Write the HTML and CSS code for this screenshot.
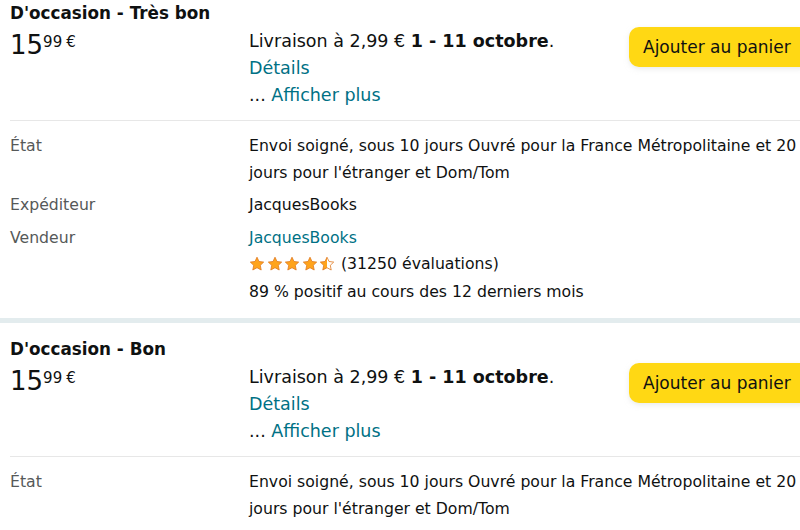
FILE: index.html
```html
<!DOCTYPE html>
<html lang="fr">
<head>
<meta charset="utf-8">
<link rel="stylesheet" href="styles.css">
</head>
<body>
<div class="page">
  <section class="offer">
    <h2 class="title">D'occasion - Très bon</h2>
    <div class="head">
      <div class="price"><span class="whole">15</span><span class="frac">99</span><span class="cur">€</span></div>
      <div class="delivery">
        <div>Livraison à 2,99 € <b>1 - 11 octobre</b>.</div>
        <div><a class="link">Détails</a></div>
        <div>... <a class="link">Afficher plus</a></div>
      </div>
      <button class="cart">Ajouter au panier</button>
    </div>
    <div class="details">
      <div class="label">État</div>
      <div class="value">Envoi soigné, sous 10 jours Ouvré pour la France Métropolitaine et 20 jours pour l'étranger et Dom/Tom</div>
      <div class="label">Expéditeur</div>
      <div class="value">JacquesBooks</div>
      <div class="label">Vendeur</div>
      <div class="value">
        <div><a class="link">JacquesBooks</a></div>
        <div class="rating">
          <span class="stars">
            <svg viewBox="0 0 16 16" width="16" height="16"><path class="st" d="M8 1.2l2 4.3 4.7.6-3.4 3.2.9 4.7L8 11.7 3.8 14l.9-4.7L1.3 6.1l4.7-.6z"/></svg>
            <svg viewBox="0 0 16 16" width="16" height="16"><path class="st" d="M8 1.2l2 4.3 4.7.6-3.4 3.2.9 4.7L8 11.7 3.8 14l.9-4.7L1.3 6.1l4.7-.6z"/></svg>
            <svg viewBox="0 0 16 16" width="16" height="16"><path class="st" d="M8 1.2l2 4.3 4.7.6-3.4 3.2.9 4.7L8 11.7 3.8 14l.9-4.7L1.3 6.1l4.7-.6z"/></svg>
            <svg viewBox="0 0 16 16" width="16" height="16"><path class="st" d="M8 1.2l2 4.3 4.7.6-3.4 3.2.9 4.7L8 11.7 3.8 14l.9-4.7L1.3 6.1l4.7-.6z"/></svg>
            <svg viewBox="0 0 16 16" width="16" height="16"><path class="st-half" d="M8 1.2L6 5.5l-4.7.6 3.4 3.2-.9 4.7L8 11.7z"/><path class="st-out" d="M8 1.2l2 4.3 4.7.6-3.4 3.2.9 4.7L8 11.7 3.8 14l.9-4.7L1.3 6.1l4.7-.6z"/></svg>
          </span>
          <span>(31250 évaluations)</span>
        </div>
        <div>89 % positif au cours des 12 derniers mois</div>
      </div>
    </div>
  </section>
  <section class="offer">
    <h2 class="title">D'occasion - Bon</h2>
    <div class="head">
      <div class="price"><span class="whole">15</span><span class="frac">99</span><span class="cur">€</span></div>
      <div class="delivery">
        <div>Livraison à 2,99 € <b>1 - 11 octobre</b>.</div>
        <div><a class="link">Détails</a></div>
        <div>... <a class="link">Afficher plus</a></div>
      </div>
      <button class="cart">Ajouter au panier</button>
    </div>
    <div class="details">
      <div class="label">État</div>
      <div class="value">Envoi soigné, sous 10 jours Ouvré pour la France Métropolitaine et 20 jours pour l'étranger et Dom/Tom</div>
      <div class="label">Expéditeur</div>
      <div class="value">JacquesBooks</div>
    </div>
  </section>
</div>
</body>
</html>
```
FILE: styles.css
```css
html, body {
  margin: 0;
  padding: 0;
  background: #ffffff;
  overflow: hidden;
}
body {
  font-family: "DejaVu Sans", "Noto Sans", sans-serif;
  color: #0f1111;
}
.page {
  width: 812px;
  margin-top: -13px;
}
.offer {
  padding: 15px 0 13px 10px;
  border-bottom: 5px solid #e3ecee;
}
.title {
  margin: 0;
  font-size: 16.8px;
  line-height: 22px;
  font-weight: 700;
}
.head {
  display: grid;
  grid-template-columns: 239px 1fr 183px;
  align-items: start;
  margin-top: 4px;
  padding-bottom: 11px;
  border-bottom: 1px solid #e7e7e7;
}
.price {
  display: flex;
  align-items: flex-start;
  padding-top: 2px;
}
.whole {
  font-size: 26px;
  line-height: 30px;
}
.frac, .cur {
  font-size: 15px;
  line-height: 18px;
  margin-top: 3px;
}
.cur {
  margin-left: 4px;
}
.delivery {
  font-size: 17.5px;
  line-height: 27px;
}
.delivery b {
  font-weight: 700;
}
.link {
  color: #007185;
  text-decoration: none;
}
.cart {
  font-family: inherit;
  font-size: 17px;
  text-align: left;
  color: #0f1111;
  background: #ffd814;
  border: none;
  border-radius: 10px;
  height: 40px;
  width: 100%;
  padding: 0 0 0 14px;
  margin-top: -1px;
  box-shadow: 0 2px 5px rgba(213, 217, 217, 0.5);
}
.details {
  display: grid;
  grid-template-columns: 239px 1fr;
  row-gap: 6px;
  padding-top: 12px;
  padding-right: 12px;
  font-size: 15.7px;
  line-height: 26.5px;
}
.label {
  color: #565959;
}
.rating {
  display: flex;
  align-items: center;
  gap: 6px;
  margin-bottom: 1px;
}
.stars {
  display: flex;
  gap: 1.5px;
}
.stars svg {
  display: block;
}
.st {
  fill: #ffa41c;
  stroke: #de7921;
  stroke-width: 0.8;
  stroke-linejoin: round;
}
.st-half {
  fill: #ffa41c;
}
.st-out {
  fill: none;
  stroke: #de7921;
  stroke-width: 0.8;
  stroke-linejoin: round;
}
```
